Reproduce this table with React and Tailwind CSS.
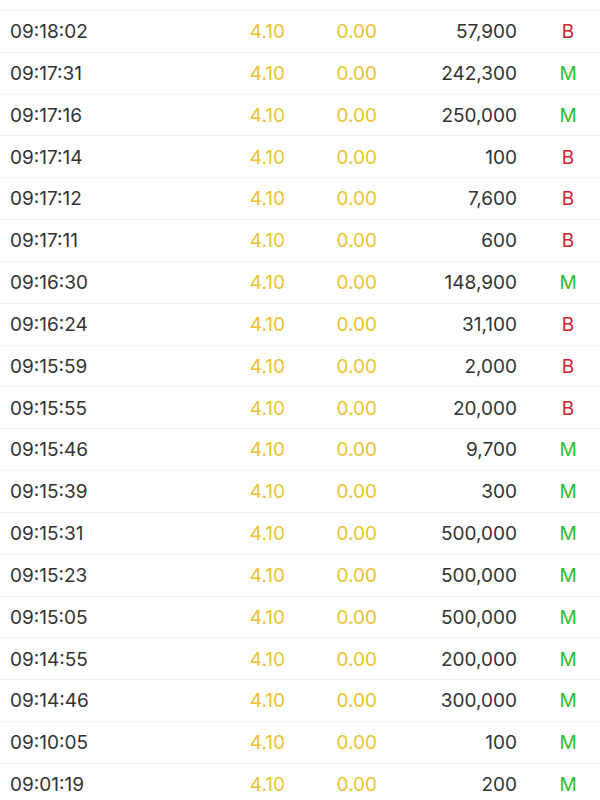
const trades = [
  ["09:18:02", "57,900", "B"],
  ["09:17:31", "242,300", "M"],
  ["09:17:16", "250,000", "M"],
  ["09:17:14", "100", "B"],
  ["09:17:12", "7,600", "B"],
  ["09:17:11", "600", "B"],
  ["09:16:30", "148,900", "M"],
  ["09:16:24", "31,100", "B"],
  ["09:15:59", "2,000", "B"],
  ["09:15:55", "20,000", "B"],
  ["09:15:46", "9,700", "M"],
  ["09:15:39", "300", "M"],
  ["09:15:31", "500,000", "M"],
  ["09:15:23", "500,000", "M"],
  ["09:15:05", "500,000", "M"],
  ["09:14:55", "200,000", "M"],
  ["09:14:46", "300,000", "M"],
  ["09:10:05", "100", "M"],
  ["09:01:19", "200", "M"],
]

function TradeRow({ time, volume, side }) {
  return (
    <div className="flex h-[41.83px] items-center border-t border-[#efefef] pt-[2px] text-[19px]">
      <div className="w-[200px] shrink-0 pl-[10px] text-[#333333]">{time}</div>
      <div className="w-[85px] shrink-0 text-right text-[#ecc22e]">4.10</div>
      <div className="w-[92px] shrink-0 text-right text-[#ecc22e]">0.00</div>
      <div className="w-[140px] shrink-0 text-right text-[#333333]">{volume}</div>
      <div className={side === "B" ? "w-[102px] shrink-0 text-center text-[#d0202f]" : "w-[102px] shrink-0 text-center text-[#27c03a]"}>
        {side}
      </div>
    </div>
  )
}

export default function App() {
  return (
    <div className="h-[800px] w-[600px] overflow-hidden bg-white pt-[10px] font-['Inter',sans-serif]">
      {trades.map(([time, volume, side]) => (
        <TradeRow key={time} time={time} volume={volume} side={side} />
      ))}
    </div>
  )
}
